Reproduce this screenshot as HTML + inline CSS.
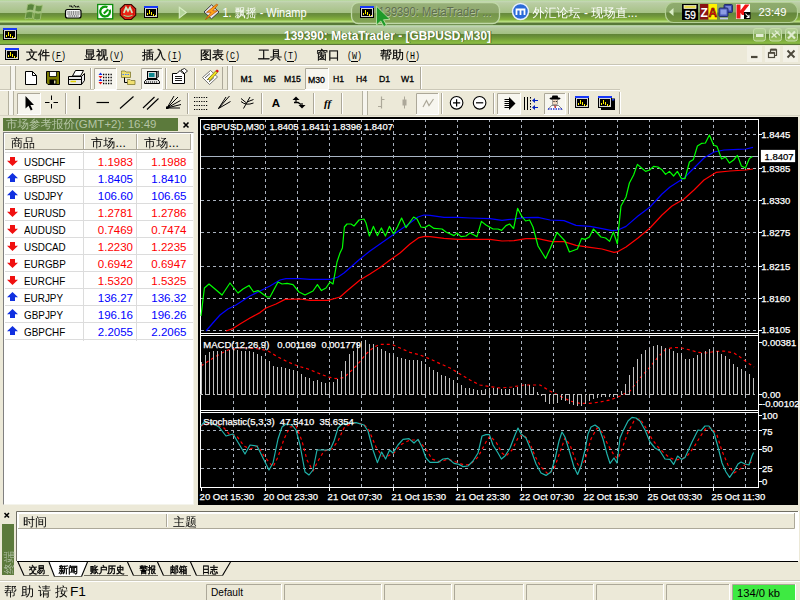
<!DOCTYPE html>
<html><head><meta charset="utf-8"><title>139390: MetaTrader - [GBPUSD,M30]</title>
<style>
html,body{margin:0;padding:0;}
body{width:800px;height:600px;overflow:hidden;position:relative;background:#ece9d8;font-family:"Liberation Sans","Noto Sans CJK SC",sans-serif;font-size:11px;color:#000;}
div,span,svg{position:absolute;box-sizing:border-box;}
.cj{font-family:"Liberation Sans","WenQuanYi Zen Hei","Noto Sans CJK SC",sans-serif;}
.sym{left:24px;width:60px;height:17px;line-height:18px;font-size:11.5px;transform:scaleX(0.86);transform-origin:0 0;}
.bid{left:87px;width:46px;height:17px;line-height:18px;font-size:11.5px;text-align:right;}
.ask{left:140.5px;width:46px;height:17px;line-height:18px;font-size:11.5px;text-align:right;}
.rl{left:5px;width:188px;height:1px;background:#dcdcdc;}
.ar{left:7px;}
</style></head><body>

<svg width="800" height="45" viewBox="0 0 800 45" style="left:0;top:0" font-family="Liberation Sans, WenQuanYi Zen Hei, Noto Sans CJK SC, sans-serif">
<defs>
<linearGradient id="gtask" x1="0" y1="0" x2="0" y2="25" gradientUnits="userSpaceOnUse">
<stop offset="0.000" stop-color="#b4d898"/><stop offset="0.060" stop-color="#c2d6b2"/><stop offset="0.120" stop-color="#bacda4"/><stop offset="0.512" stop-color="#a6c286"/><stop offset="0.524" stop-color="#66883e"/><stop offset="0.640" stop-color="#6f963a"/><stop offset="0.780" stop-color="#86b23e"/><stop offset="0.860" stop-color="#b6de7c"/><stop offset="0.908" stop-color="#8aa860"/><stop offset="0.928" stop-color="#587838"/><stop offset="1.000" stop-color="#587838"/>
</linearGradient>
<linearGradient id="gtitle" x1="0" y1="25" x2="0" y2="45" gradientUnits="userSpaceOnUse">
<stop offset="0.000" stop-color="#acd094"/><stop offset="0.075" stop-color="#bdd1b1"/><stop offset="0.150" stop-color="#b2c89c"/><stop offset="0.440" stop-color="#a2c082"/><stop offset="0.455" stop-color="#5f8238"/><stop offset="0.6" stop-color="#6a9236"/><stop offset="0.850" stop-color="#86b63e"/><stop offset="0.920" stop-color="#8abc44"/><stop offset="0.950" stop-color="#587634"/><stop offset="1.000" stop-color="#587634"/>
</linearGradient>
<linearGradient id="gbtn" x1="0" y1="2" x2="0" y2="24" gradientUnits="userSpaceOnUse">
<stop offset="0" stop-color="#98b07a"/><stop offset="0.48" stop-color="#8ea86c"/><stop offset="0.53" stop-color="#74944a"/><stop offset="1" stop-color="#86a856"/>
</linearGradient>
<linearGradient id="gtray" x1="0" y1="2" x2="0" y2="22" gradientUnits="userSpaceOnUse">
<stop offset="0" stop-color="#90ac70"/><stop offset="0.5" stop-color="#88a666"/><stop offset="0.55" stop-color="#64863c"/><stop offset="1" stop-color="#76983f"/>
</linearGradient>
<linearGradient id="gcap" x1="0" y1="28" x2="0" y2="41" gradientUnits="userSpaceOnUse">
<stop offset="0" stop-color="#b4d098"/><stop offset="0.42" stop-color="#a6c686"/><stop offset="0.5" stop-color="#82a852"/><stop offset="1" stop-color="#9cc45c"/>
</linearGradient>

</defs>
<rect x="0" y="0" width="800" height="25" fill="url(#gtask)"/>
<rect x="0" y="25" width="800" height="20" fill="url(#gtitle)"/>
<g stroke="#a4c47c" stroke-width="0.9" opacity="0.9"><path d="M27.500 4.500Q31 3 34.500 4.500L33.500 10.500Q30 9.500 26.500 11Z" fill="#4f7c32"/><path d="M35.800 5Q39 6.500 42.500 5L41.500 11.500Q38 12.500 34.800 11Z" fill="#5c8a3a"/><path d="M26.200 12.200Q29.500 10.800 33.200 12L32.200 18.500Q28.800 17.500 25 19Z" fill="#5c8a3a"/><path d="M34.500 12.500Q37.800 14 41.200 12.800L40.200 19.500Q36.800 20.500 33.500 19Z" fill="#66923e"/></g>
<g><path d="M69.500 6.500q1-1.500 2 0t2 0 2 0 2 0 1.500 1.5" fill="none" stroke="#111" stroke-width="1.3" stroke-dasharray="1.200,0.6"/><rect x="65.5" y="9.5" width="15.5" height="8.5" rx="2" fill="#f6f6f6" stroke="#000" stroke-width="1.2"/><path d="M67.500 12H79.500M67.500 14H79.500M68.500 16H78.5" stroke="#222" stroke-width="1.2" stroke-dasharray="1.100,0.700"/></g>
<g><rect x="97.700" y="4.5" width="15" height="14.3" fill="#fff" stroke="#0c8c0c" stroke-width="1.3"/><path d="M107.40 7.27A4.9 4.9 0 1 0 109.64 9.76" fill="none" stroke="#0c9c0c" stroke-width="2.3"/><path d="M103.800 13.600L108.300 9.3" stroke="#0c9c0c" stroke-width="2.100"/></g>
<g><path d="M124.700 4.500H131.300L135.700 8.800V15.200L131.300 19.500H124.700L120.300 15.200V8.800Z" fill="#ee2416" stroke="#3a0804" stroke-width="1.100"/><circle cx="128" cy="12" r="6" fill="none" stroke="#b01008" stroke-width="0.8"/><path d="M123.800 13L126 7.500L128 11L130 7.500L132.200 13" fill="none" stroke="#cdeac4" stroke-width="1.700" stroke-linejoin="miter"/><path d="M123.500 15.300Q128 17.300 132.500 15.3" stroke="#9cd890" stroke-width="1.2" fill="none"/></g>
<g transform="translate(144,6)" shape-rendering="crispEdges"><rect x="0" y="0" width="14" height="12" fill="#000"/><rect x="0" y="0" width="14" height="2" fill="#1838f8"/><rect x="1.5" y="2.5" width="11" height="8" fill="#000" stroke="#d4d4d4" stroke-width="1"/><path d="M3.5 9V7M5.5 7.500V4M7.500 9V5.500M9.500 10V7.500M11.500 10V8.5" stroke="#fff000" stroke-width="1"/></g>
<path d="M179.300 7.300L186.300 12.600L179.300 17.900Z" fill="#b4d49a" stroke="#d8ecc4" stroke-width="1.100"/>
<g><path d="M204 12L211.500 4.800L219 12L211.500 18.800Z" fill="#e4e4ec" stroke="#3c3c44" stroke-width="1"/><path d="M216.500 4.300L206.500 12.300H211L205.500 19.500L217.500 10.800H212.800L217.800 4.800Z" fill="#ffa418" stroke="#b84800" stroke-width="0.700"/></g>
<text x="222.5" y="16.5" font-size="12" fill="#fff" textLength="84" lengthAdjust="spacingAndGlyphs">1. 飘摇 - Winamp</text>
<rect x="351.5" y="2.5" width="148" height="21" rx="7" fill="url(#gbtn)" stroke="#c0d8a8" stroke-width="1.3"/>
<g transform="translate(360,6)" shape-rendering="crispEdges"><rect x="0" y="0" width="14" height="12" fill="#000"/><rect x="0" y="0" width="14" height="2" fill="#1838f8"/><rect x="1.5" y="2.5" width="11" height="8" fill="#000" stroke="#d4d4d4" stroke-width="1"/><path d="M3.5 9V7M5.5 7.500V4M7.500 9V5.500M9.500 10V7.500M11.500 10V8.5" stroke="#fff000" stroke-width="1"/></g>
<text x="379" y="16.5" font-size="12" fill="#b9c9a3" opacity="0.95" textLength="113" lengthAdjust="spacingAndGlyphs">139390: MetaTrader ...</text>
<text x="378.5" y="16" font-size="12" fill="#5e6e4e" textLength="113" lengthAdjust="spacingAndGlyphs">139390: MetaTrader ...</text>
<path d="M376.500 6.200V25L380.800 21L383.800 26.500L386.500 25.200L383.500 19.800L390 19.300Z" fill="#1f9a2a" stroke="#b8e0a0" stroke-width="0.9"/>
<g><circle cx="520.5" cy="11.5" r="8" fill="#2a6ad8" stroke="#e8f0ff" stroke-width="1.5"/><path d="M516.500 15V9.500H524.500V15M520.500 10V15" fill="none" stroke="#fff" stroke-width="1.8"/></g>
<text x="532.5" y="16.5" font-size="12.5" fill="#fff" textLength="105" lengthAdjust="spacingAndGlyphs">外汇论坛 - 现场直...</text>
<rect x="665.5" y="2.5" width="132" height="20" rx="8" fill="url(#gtray)" stroke="#b4d096" stroke-width="1.2"/>
<path d="M673.500 8L669 12L673.500 16Z" fill="#d8ecc4"/>
<g><rect x="682" y="4" width="16" height="16" fill="#000"/><rect x="684" y="5.5" width="12" height="3" fill="#e8dc50" stroke="#f8f8e8" stroke-width="0.700"/><text x="690.2" y="18.700" font-size="10" fill="#fff" stroke="#fff" stroke-width="0.3" text-anchor="middle">59</text></g>
<g><rect x="700" y="4" width="8.5" height="15.5" fill="#8a1414"/><rect x="708.5" y="4" width="8.5" height="15.5" fill="#fff200"/><text x="704.2" y="16.8" font-size="12" font-weight="bold" fill="#fff" text-anchor="middle">Z</text><text x="712.8" y="16.8" font-size="12" font-weight="bold" fill="#e81010" stroke="#400" stroke-width="0.5" text-anchor="middle">A</text></g>
<g><rect x="724" y="4.5" width="8.5" height="8" rx="1" fill="#3848a8" stroke="#1c2468" stroke-width="0.9"/><rect x="725.5" y="6" width="5.5" height="4.5" fill="#7888d8"/><rect x="719" y="8" width="9" height="8.5" rx="1" fill="#4858b8" stroke="#1c2468" stroke-width="0.9"/><rect x="720.5" y="9.5" width="6" height="5" fill="#8c9ce4"/><path d="M720 18.500H728" stroke="#c0c8e8" stroke-width="1.8"/></g>
<g><rect x="736" y="4" width="14" height="15" fill="#fff"/><path d="M736.500 4.500H740.500V10.500L745 4.500H749.500L743.800 11.800L746 15H742L740.500 12.800V18.500H736.500Z" fill="#f01414"/><rect x="744" y="12" width="6.5" height="7" fill="#000"/><path d="M745.500 13.500L749 17.500M749 14.800V17.500H746.5" stroke="#fff" stroke-width="1.100" fill="none"/></g>
<text x="758.5" y="16" font-size="11.2" fill="#fff">23:49</text>
<g transform="translate(3,28)" shape-rendering="crispEdges"><rect x="0" y="0" width="14" height="12" fill="#000"/><rect x="0" y="0" width="14" height="2" fill="#1838f8"/><rect x="1.5" y="2.5" width="11" height="8" fill="#000" stroke="#d4d4d4" stroke-width="1"/><path d="M3.5 9V7M5.5 7.500V4M7.500 9V5.500M9.500 10V7.500M11.500 10V8.5" stroke="#fff000" stroke-width="1"/></g>
<text x="285" y="40.2" font-size="12.5" font-weight="bold" fill="#4f6a30" textLength="207" lengthAdjust="spacingAndGlyphs">139390: MetaTrader - [GBPUSD,M30]</text>
<text x="284" y="39.5" font-size="12.5" font-weight="bold" fill="#fff" textLength="207" lengthAdjust="spacingAndGlyphs">139390: MetaTrader - [GBPUSD,M30]</text>
<rect x="753.5" y="28.5" width="12" height="12.5" rx="2.5" fill="url(#gcap)" stroke="#c4dca8" stroke-width="1"/>
<rect x="769.5" y="28.5" width="12" height="12.5" rx="2.5" fill="url(#gcap)" stroke="#c4dca8" stroke-width="1"/>
<rect x="785.5" y="28.5" width="12" height="12.5" rx="2.5" fill="url(#gcap)" stroke="#c4dca8" stroke-width="1"/>
<rect x="756" y="34" width="7.5" height="3" fill="#e4eed6"/>
<path d="M771.500 37.500L778.500 31.500M775 30.500L780 35.500M772 33L776.500 37.5" stroke="#e0ecd0" stroke-width="1.3" fill="none"/>
<path d="M788 31.500L795 38.500M795 31.500L788 38.5" stroke="#e0ecd0" stroke-width="2.2"/>
</svg>
<svg width="800" height="72" viewBox="0 45 800 72" style="left:0;top:45px" font-family="Liberation Sans, WenQuanYi Zen Hei, Noto Sans CJK SC, sans-serif">
<rect x="0" y="45" width="800" height="72" fill="#ece9d8"/>
<path d="M0 64.500H800" stroke="#aca899" stroke-width="1" opacity="0.55"/><path d="M0 65.500H800" stroke="#ffffff" stroke-width="1"/>
<path d="M0 89.500H620" stroke="#aca899" opacity="0.5"/><path d="M0 90.500H620" stroke="#ffffff"/>
<path d="M0 115.500H800" stroke="#aca899" opacity="0.35"/>
<g transform="translate(5,48)"><g shape-rendering="crispEdges"><rect x="0" y="0" width="14" height="12" fill="#000"/><rect x="0" y="0" width="14" height="2" fill="#1838f8"/><rect x="1.5" y="2.5" width="11" height="8" fill="#000" stroke="#d4d4d4" stroke-width="1"/><path d="M3.5 9V7M5.5 7.500V4M7.500 9V5.500M9.500 10V7.500M11.500 10V8.500" stroke="#fff000" stroke-width="1"/></g></g>
<text x="26" y="59" font-size="12" fill="#000" stroke="#000" stroke-width="0.250">文件</text>
<text x="51" y="59" font-size="11.500" font-family="Liberation Mono, monospace" fill="#000" textLength="15" lengthAdjust="spacingAndGlyphs">(F)</text>
<path d="M55 61.500H62" stroke="#000" stroke-width="1"/>
<text x="84" y="59" font-size="12" fill="#000" stroke="#000" stroke-width="0.250">显视</text>
<text x="109" y="59" font-size="11.500" font-family="Liberation Mono, monospace" fill="#000" textLength="15" lengthAdjust="spacingAndGlyphs">(V)</text>
<path d="M113 61.500H120" stroke="#000" stroke-width="1"/>
<text x="142" y="59" font-size="12" fill="#000" stroke="#000" stroke-width="0.250">插入</text>
<text x="167" y="59" font-size="11.500" font-family="Liberation Mono, monospace" fill="#000" textLength="15" lengthAdjust="spacingAndGlyphs">(I)</text>
<path d="M171 61.500H178" stroke="#000" stroke-width="1"/>
<text x="200" y="59" font-size="12" fill="#000" stroke="#000" stroke-width="0.250">图表</text>
<text x="225" y="59" font-size="11.500" font-family="Liberation Mono, monospace" fill="#000" textLength="15" lengthAdjust="spacingAndGlyphs">(C)</text>
<path d="M229 61.500H236" stroke="#000" stroke-width="1"/>
<text x="258" y="59" font-size="12" fill="#000" stroke="#000" stroke-width="0.250">工具</text>
<text x="283" y="59" font-size="11.500" font-family="Liberation Mono, monospace" fill="#000" textLength="15" lengthAdjust="spacingAndGlyphs">(T)</text>
<path d="M287 61.500H294" stroke="#000" stroke-width="1"/>
<text x="316" y="59" font-size="12" fill="#000" stroke="#000" stroke-width="0.250">窗口 </text>
<text x="347" y="59" font-size="11.500" font-family="Liberation Mono, monospace" fill="#000" textLength="15" lengthAdjust="spacingAndGlyphs">(W)</text>
<path d="M351 61.500H358" stroke="#000" stroke-width="1"/>
<text x="380" y="59" font-size="12" fill="#000" stroke="#000" stroke-width="0.250">帮助</text>
<text x="405" y="59" font-size="11.500" font-family="Liberation Mono, monospace" fill="#000" textLength="15" lengthAdjust="spacingAndGlyphs">(H)</text>
<path d="M409 61.500H416" stroke="#000" stroke-width="1"/>
<rect x="747" y="46" width="15" height="16" fill="#f3f1e6"/>
<rect x="765" y="46" width="15" height="16" fill="#f3f1e6"/>
<rect x="783" y="46" width="15" height="16" fill="#f3f1e6"/>
<path d="M751 57H757.500" stroke="#4c483c" stroke-width="2.200"/>
<path d="M770.500 52V49.800H776.500V55.500H774.500" stroke="#4c483c" fill="none" stroke-width="1.200"/><path d="M770.500 49.500H776.500" stroke="#4c483c" stroke-width="1.800"/><rect x="768.500" y="52.800" width="6" height="4.700" fill="#f3f1e6" stroke="#4c483c" stroke-width="1.200"/><path d="M768.500 52.800H774.500" stroke="#4c483c" stroke-width="1.800"/>
<path d="M787.500 50.500L794.500 57.500M794.500 50.500L787.500 57.500" stroke="#4c483c" stroke-width="1.900"/>
<rect x="10" y="66" width="5" height="24" fill="#f6f5ee"/><path d="M10.5 66V90M15.5 66V90" stroke="#b4b1a0"/>
<path d="M25.500 71.500H32.500L36.500 75.500V84.500H25.500Z" fill="#fff" stroke="#000"/><path d="M32.500 71.500V75.500H36.500" fill="none" stroke="#000"/>
<path d="M46.500 71.500H59.500V84.500H48L46.500 83Z" fill="#7b7b00" stroke="#000"/><rect x="49.500" y="71.500" width="7" height="5" fill="#fff" stroke="#000" stroke-width="0.800"/><rect x="49.500" y="79.500" width="7" height="5" fill="#000"/><rect x="54" y="80.500" width="1.500" height="3" fill="#d8d8a0"/>
<path d="M72.500 76L75.500 70.500H83.500L80.500 76Z" fill="#fff" stroke="#000"/><path d="M68.500 76.500H81.500L84.500 73.500V80.500L81.500 84.500H68.500Z" fill="#e8e8e8" stroke="#000"/><path d="M81.500 76.500V84.500M69 79.500H81" stroke="#000" fill="none"/><path d="M70.500 81.500H76" stroke="#e0d000" stroke-width="1.500"/>
<path d="M90.5 68V89" stroke="#aca899"/><path d="M91.5 68V89" stroke="#ffffff"/>
<rect x="94" y="68" width="22" height="21" fill="#f7f6ef"/><path d="M94.5 89V68.5H116" stroke="#aca899" fill="none"/><path d="M116.5 68V89.5H94" stroke="#ffffff" fill="none"/>
<path d="M103 74.5H113" stroke="#000" stroke-width="1.400" stroke-dasharray="1.300,1.200"/>
<path d="M103 77.5H113" stroke="#000" stroke-width="1.400" stroke-dasharray="1.300,1.200"/>
<path d="M103 80.5H113" stroke="#000" stroke-width="1.400" stroke-dasharray="1.300,1.200"/>
<path d="M103 83.5H113" stroke="#000" stroke-width="1.400" stroke-dasharray="1.300,1.200"/>
<path d="M98.500 75L100.500 72.500L102.500 75Z" fill="#1030e0"/><path d="M98.500 76L100.500 78.500L102.500 76Z" fill="#f01010"/><path d="M98.500 81L100.500 78.800L102.500 81Z" fill="#1030e0"/><path d="M98.500 82L100.500 84.500L102.500 82Z" fill="#f01010"/>
<path d="M121.500 72.500V71H125L126 72H130.500V77.500H121.500Z" fill="#f0e070" stroke="#807830" stroke-width="0.800"/><path d="M124.500 77.500V82.500H128" stroke="#000" fill="none"/><path d="M127.500 80.500V79.500H130L131 80.500H135V84.500H127.500Z" fill="#f0e070" stroke="#807830" stroke-width="0.800"/><path d="M122.500 74.500H129.500" stroke="#4080ff" stroke-width="1.200" stroke-dasharray="1.500,1"/>
<rect x="141" y="68" width="21" height="21" fill="#f7f6ef"/><path d="M141.5 89V68.5H162" stroke="#aca899" fill="none"/><path d="M162.5 68V89.5H141" stroke="#ffffff" fill="none"/>
<rect x="147.500" y="71.500" width="9" height="7" fill="#d8d8d8" stroke="#000"/><rect x="149" y="73" width="5.500" height="4" fill="#108890"/><path d="M156.500 72V78.500L158.500 77V71Z" fill="#808080" stroke="#000" stroke-width="0.600"/><path d="M146.500 79.500H157.500L159.500 81.500V83.500H144.500V81.500Z" fill="#e0e0e0" stroke="#000"/><path d="M146 82H158" stroke="#000" stroke-dasharray="1,1"/>
<path d="M165.5 68V89" stroke="#aca899"/><path d="M166.5 68V89" stroke="#ffffff"/>
<path d="M172.500 73.500H177L180 70.500L183 73.500H184.500V83.500H172.500Z" fill="#fff" stroke="#000"/><path d="M175 76.500H182M175 78.500H182M175 80.500H182" stroke="#000" stroke-width="0.900"/><path d="M181 70L184.500 68.500L187.500 71L184.500 73.500Z" fill="#fff" stroke="#000" stroke-width="0.800"/>
<path d="M194.5 68V89" stroke="#aca899"/><path d="M195.5 68V89" stroke="#ffffff"/>
<path d="M202.500 77.500L210.500 70.500L217.500 77L209.500 84.500Z" fill="#fff" stroke="#555" stroke-width="0.800"/><path d="M205 78L210 73.500M207 80L212 75.500M209 82L214 77.500" stroke="#333" stroke-width="0.800"/><path d="M208 79L215.500 71L217.500 72.500L210 80.500Z" fill="#f0e020" stroke="#605800" stroke-width="0.600"/><path d="M215.500 71L217 69.500L219 71L217.500 72.500Z" fill="#e01010"/>
<path d="M222.500 67V89" stroke="#aca899"/>
<rect x="227" y="66" width="5" height="24" fill="#f6f5ee"/><path d="M227.5 66V90M232.5 66V90" stroke="#b4b1a0"/>
<rect x="305" y="68" width="23" height="21" fill="#f7f6ef"/><path d="M305.5 89V68.5H328" stroke="#aca899" fill="none"/><path d="M328.5 68V89.5H305" stroke="#ffffff" fill="none"/>
<text x="246.5" y="81.8" font-size="8.700" text-anchor="middle" fill="#000" stroke="#000" stroke-width="0.300">M1</text>
<text x="269.5" y="81.8" font-size="8.700" text-anchor="middle" fill="#000" stroke="#000" stroke-width="0.300">M5</text>
<text x="292.5" y="81.8" font-size="8.700" text-anchor="middle" fill="#000" stroke="#000" stroke-width="0.300">M15</text>
<text x="316.5" y="82.5" font-size="8.700" text-anchor="middle" fill="#000" stroke="#000" stroke-width="0.300">M30</text>
<text x="338.5" y="81.8" font-size="8.700" text-anchor="middle" fill="#000" stroke="#000" stroke-width="0.300">H1</text>
<text x="361.5" y="81.8" font-size="8.700" text-anchor="middle" fill="#000" stroke="#000" stroke-width="0.300">H4</text>
<text x="384.5" y="81.8" font-size="8.700" text-anchor="middle" fill="#000" stroke="#000" stroke-width="0.300">D1</text>
<text x="407.5" y="81.8" font-size="8.700" text-anchor="middle" fill="#000" stroke="#000" stroke-width="0.300">W1</text>
<path d="M420.500 67V89" stroke="#aca899"/><path d="M421.500 67V89" stroke="#ffffff"/>
<rect x="8" y="91" width="5" height="24" fill="#f6f5ee"/><path d="M8.5 91V115M13.5 91V115" stroke="#b4b1a0"/>
<rect x="17" y="93" width="23" height="21" fill="#f7f6ef"/><path d="M17.5 114V93.5H40" stroke="#aca899" fill="none"/><path d="M40.5 93V114.5H17" stroke="#ffffff" fill="none"/>
<path d="M25.500 96V108.500L28.500 105.800L30.800 110.500L32.600 109.600L30.400 105H34Z" fill="#000"/>
<path d="M51.500 95.500V100M51.500 104V108.500M45 102.500H49.500M53.500 102.500H58" stroke="#000"/>
<path d="M65.5 93V114" stroke="#aca899"/><path d="M66.5 93V114" stroke="#ffffff"/>
<path d="M79.500 96V109" stroke="#000" stroke-width="1.200"/>
<path d="M96.500 102.500H109" stroke="#000" stroke-width="1.200"/>
<path d="M120 108.500L133.500 96.500" stroke="#000" stroke-width="1.100"/>
<path d="M143 108L154.500 97M147 109.500L158.500 98.500" stroke="#000" stroke-width="1.100"/>
<path d="M167 108L174 96M167 108L178 97M167 108L180.500 100.500M167 108L181 104.500M167 108L180 108" stroke="#000" stroke-width="1"/><rect x="166" y="106.500" width="2.500" height="2.500" fill="#000"/>
<path d="M187.5 93V114" stroke="#aca899"/><path d="M188.5 93V114" stroke="#ffffff"/>
<path d="M194 97.5H207.500" stroke="#000" stroke-width="1.200" stroke-dasharray="1.200,1.200"/>
<path d="M194 101.5H207.500" stroke="#000" stroke-width="1.200" stroke-dasharray="1.200,1.200"/>
<path d="M194 105.5H207.500" stroke="#000" stroke-width="1.200" stroke-dasharray="1.200,1.200"/>
<path d="M194 109.5H207.500" stroke="#000" stroke-width="1.200" stroke-dasharray="1.200,1.200"/>
<path d="M218.500 108.500L229.500 96M218.500 108.500L230.500 101.500M218.500 108.500L226 97" stroke="#000" stroke-width="1"/>
<path d="M243.500 108.500L250 97M246.500 103L241 98.500M247 102L253.500 99.500M241 101.500Q246 106 253.500 103" stroke="#000" stroke-width="1" fill="none"/>
<path d="M261.5 93V114" stroke="#aca899"/><path d="M262.5 93V114" stroke="#ffffff"/>
<text x="276" y="107.300" font-size="11.500" font-weight="bold" text-anchor="middle" fill="#000">A</text>
<path d="M292.500 100L296 96.500L299.500 100Z" fill="#000"/><path d="M298.500 105L302 108.500L305.500 105Z" fill="#000"/><path d="M294 102.500L298 102.500L301 104.500" stroke="#000" stroke-width="1.500" fill="none"/><path d="M296 100V102M302 103V105" stroke="#000" stroke-width="1.200"/>
<path d="M313.5 93V114" stroke="#aca899"/><path d="M314.5 93V114" stroke="#ffffff"/>
<text x="327.500" y="106.500" font-size="11" font-style="italic" font-weight="bold" font-family="Liberation Serif, serif" text-anchor="middle" fill="#000">ff</text>
<path d="M341.5 93V114" stroke="#aca899"/><path d="M342.5 93V114" stroke="#ffffff"/>
<rect x="362" y="91" width="5" height="24" fill="#f6f5ee"/><path d="M362.5 91V115M367.5 91V115" stroke="#b4b1a0"/>
<path d="M381.500 96.500V108.500M381.500 99.500H384.500M378 106.500H381.500" stroke="#aca899" stroke-width="1.200" fill="none"/>
<path d="M404.500 96.500V108.500" stroke="#aca899"/><rect x="402.500" y="99.500" width="4" height="6" fill="#aca899"/>
<rect x="416" y="93" width="22" height="21" fill="#f7f6ef"/><path d="M416.5 114V93.5H438" stroke="#aca899" fill="none"/><path d="M438.5 93V114.5H416" stroke="#ffffff" fill="none"/>
<path d="M423 107L426.500 100.500L429 105.500L433.500 99" stroke="#aca899" stroke-width="1.200" fill="none"/>
<path d="M441.5 93V114" stroke="#aca899"/><path d="M442.5 93V114" stroke="#ffffff"/>
<circle cx="456.600" cy="102.800" r="6.300" fill="#fff" stroke="#000" stroke-width="1.100"/><path d="M453 102.800H460.200M456.600 99.200V106.400" stroke="#000" stroke-width="1.200"/>
<circle cx="479.600" cy="102.800" r="6.300" fill="#fff" stroke="#000" stroke-width="1.100"/><path d="M476 102.800H483.200" stroke="#000" stroke-width="1.200"/>
<path d="M493.5 93V114" stroke="#aca899"/><path d="M494.5 93V114" stroke="#ffffff"/>
<rect x="497" y="93" width="23" height="21" fill="#f7f6ef"/><path d="M497.5 114V93.5H520" stroke="#aca899" fill="none"/><path d="M520.5 93V114.5H497" stroke="#ffffff" fill="none"/>
<path d="M509 97L515.500 103.500L509 110Z" fill="#000"/><path d="M504.500 99.500H509M504.500 101.500H509M504.500 103.500H509M504.500 105.500H509M504.500 107.500H509" stroke="#000" stroke-width="1"/>
<path d="M524.500 97V110M527.500 97V110" stroke="#000"/><path d="M530.500 97V110" stroke="#000" stroke-dasharray="1.500,1.500"/><path d="M532 100.500L535 98V103ZM532 107.500L535 105V110Z" fill="#0020c0"/><path d="M534 100.500H538M534 107.500H538" stroke="#0020c0" stroke-width="1.200"/>
<rect x="544" y="93" width="21" height="21" fill="#f7f6ef"/><path d="M544.5 114V93.5H565" stroke="#aca899" fill="none"/><path d="M565.5 93V114.5H544" stroke="#ffffff" fill="none"/>
<ellipse cx="555" cy="98.500" rx="5.500" ry="1.300" fill="#000"/><rect x="552" y="95.500" width="6" height="3" rx="1" fill="#000"/><rect x="552.500" y="99.500" width="5" height="5" fill="#f4d8c0" stroke="#555" stroke-width="0.500"/><path d="M553.500 101.500H554.500M555.800 101.500H556.800" stroke="#000"/><path d="M548 109.500L551.500 105.500H558.500L562.500 109.500" fill="#fff" stroke="#555" stroke-width="0.700"/><path d="M548 109H562.500" stroke="#2030d0" stroke-width="1.500" stroke-dasharray="1.500,1"/><path d="M554.500 105.500L555.200 108L556 105.500" stroke="#c01010" fill="none" stroke-width="0.800"/>
<path d="M568.5 93V114" stroke="#aca899"/><path d="M569.5 93V114" stroke="#ffffff"/>
<g transform="translate(575,96)"><g shape-rendering="crispEdges"><rect x="0" y="0" width="14" height="12" fill="#000"/><rect x="0" y="0" width="14" height="2" fill="#1838f8"/><rect x="1.5" y="2.5" width="11" height="8" fill="#000" stroke="#d4d4d4" stroke-width="1"/><path d="M3.5 9V7M5.5 7.500V4M7.500 9V5.500M9.500 10V7.500M11.500 10V8.500" stroke="#fff000" stroke-width="1"/></g></g>
<rect x="601" y="98.500" width="14" height="11.500" fill="#000"/><rect x="601.800" y="99" width="12.500" height="1.500" fill="#2040e0"/>
<g transform="translate(598,96)"><g shape-rendering="crispEdges"><rect x="0" y="0" width="14" height="12" fill="#000"/><rect x="0" y="0" width="14" height="2" fill="#1838f8"/><rect x="1.5" y="2.5" width="11" height="8" fill="#000" stroke="#d4d4d4" stroke-width="1"/><path d="M3.5 9V7M5.5 7.500V4M7.500 9V5.500M9.500 10V7.500M11.500 10V8.500" stroke="#fff000" stroke-width="1"/></g></g>
<path d="M619.500 92V114" stroke="#aca899"/><path d="M620.500 92V114" stroke="#ffffff"/>
</svg>

<!-- market watch -->
<div id="mwhead" class="cj" style="left:3px;top:118px;width:175px;height:13px;background:#5c7a3c;color:#b4c4a4;font-size:11.5px;line-height:13px;padding-left:3px;white-space:nowrap;overflow:hidden">市场参考报价(GMT+2): 16:49</div>
<svg style="left:182px;top:121px" width="8" height="8" viewBox="0 0 8 8"><path d="M1.5 1.5L6.5 6.5M6.5 1.500L1.500 6.500" stroke="#000" stroke-width="1.600"/></svg>
<div id="mw" style="left:3px;top:132px;width:191px;height:373px;background:#fff;border:1px solid;border-color:#808080 #f4f4ec #f4f4ec #808080"></div>
<div style="left:5px;top:133px;width:186px;height:17px;background:#ece9d8;border-bottom:1px solid #aca899;border-top:1px solid #fff"></div>
<div class="cj" style="left:11px;top:136px;font-size:12px;line-height:14px">商品</div>
<div class="cj" style="left:91px;top:136px;font-size:12px;line-height:14px;letter-spacing:0.2px">市场...</div>
<div class="cj" style="left:144px;top:136px;font-size:12px;line-height:14px;letter-spacing:0.2px">市场...</div>
<div style="left:83px;top:134px;width:1px;height:15px;background:#aca899"></div><div style="left:84px;top:134px;width:1px;height:15px;background:#fff"></div>
<div style="left:136px;top:134px;width:1px;height:15px;background:#aca899"></div><div style="left:137px;top:134px;width:1px;height:15px;background:#fff"></div>
<div style="left:190px;top:134px;width:1px;height:15px;background:#aca899"></div>
<div style="left:83px;top:151px;width:1px;height:190px;background:#dcdcdc"></div>
<div style="left:136px;top:151px;width:1px;height:190px;background:#dcdcdc"></div>
<div class="rl" style="top:152px"></div>
<svg class="ar" style="top:157px" width="11" height="10" viewBox="0 0 11 10"><path d="M3 0H8V3.800H11L5.5 9L0 3.800H3Z" fill="#f01010"/></svg><div class="sym" style="top:153px">USDCHF</div><div class="bid" style="top:153px;color:#ff0000">1.1983</div><div class="ask" style="top:153px;color:#ff0000">1.1988</div><div class="rl" style="top:169px"></div>
<svg class="ar" style="top:173px" width="11" height="10" viewBox="0 0 11 10"><path d="M5.5 0L11 5.2H8V9H3V5.2H0Z" fill="#1030e0"/></svg><div class="sym" style="top:170px">GBPUSD</div><div class="bid" style="top:170px;color:#0000ff">1.8405</div><div class="ask" style="top:170px;color:#0000ff">1.8410</div><div class="rl" style="top:186px"></div>
<svg class="ar" style="top:190px" width="11" height="10" viewBox="0 0 11 10"><path d="M5.5 0L11 5.2H8V9H3V5.2H0Z" fill="#1030e0"/></svg><div class="sym" style="top:187px">USDJPY</div><div class="bid" style="top:187px;color:#0000ff">106.60</div><div class="ask" style="top:187px;color:#0000ff">106.65</div><div class="rl" style="top:203px"></div>
<svg class="ar" style="top:208px" width="11" height="10" viewBox="0 0 11 10"><path d="M3 0H8V3.800H11L5.5 9L0 3.800H3Z" fill="#f01010"/></svg><div class="sym" style="top:204px">EURUSD</div><div class="bid" style="top:204px;color:#ff0000">1.2781</div><div class="ask" style="top:204px;color:#ff0000">1.2786</div><div class="rl" style="top:220px"></div>
<svg class="ar" style="top:225px" width="11" height="10" viewBox="0 0 11 10"><path d="M3 0H8V3.800H11L5.5 9L0 3.800H3Z" fill="#f01010"/></svg><div class="sym" style="top:221px">AUDUSD</div><div class="bid" style="top:221px;color:#ff0000">0.7469</div><div class="ask" style="top:221px;color:#ff0000">0.7474</div><div class="rl" style="top:237px"></div>
<svg class="ar" style="top:242px" width="11" height="10" viewBox="0 0 11 10"><path d="M3 0H8V3.800H11L5.5 9L0 3.800H3Z" fill="#f01010"/></svg><div class="sym" style="top:238px">USDCAD</div><div class="bid" style="top:238px;color:#ff0000">1.2230</div><div class="ask" style="top:238px;color:#ff0000">1.2235</div><div class="rl" style="top:254px"></div>
<svg class="ar" style="top:259px" width="11" height="10" viewBox="0 0 11 10"><path d="M3 0H8V3.800H11L5.5 9L0 3.800H3Z" fill="#f01010"/></svg><div class="sym" style="top:255px">EURGBP</div><div class="bid" style="top:255px;color:#ff0000">0.6942</div><div class="ask" style="top:255px;color:#ff0000">0.6947</div><div class="rl" style="top:271px"></div>
<svg class="ar" style="top:276px" width="11" height="10" viewBox="0 0 11 10"><path d="M3 0H8V3.800H11L5.5 9L0 3.800H3Z" fill="#f01010"/></svg><div class="sym" style="top:272px">EURCHF</div><div class="bid" style="top:272px;color:#ff0000">1.5320</div><div class="ask" style="top:272px;color:#ff0000">1.5325</div><div class="rl" style="top:288px"></div>
<svg class="ar" style="top:292px" width="11" height="10" viewBox="0 0 11 10"><path d="M5.5 0L11 5.2H8V9H3V5.2H0Z" fill="#1030e0"/></svg><div class="sym" style="top:289px">EURJPY</div><div class="bid" style="top:289px;color:#0000ff">136.27</div><div class="ask" style="top:289px;color:#0000ff">136.32</div><div class="rl" style="top:305px"></div>
<svg class="ar" style="top:309px" width="11" height="10" viewBox="0 0 11 10"><path d="M5.5 0L11 5.2H8V9H3V5.2H0Z" fill="#1030e0"/></svg><div class="sym" style="top:306px">GBPJPY</div><div class="bid" style="top:306px;color:#0000ff">196.16</div><div class="ask" style="top:306px;color:#0000ff">196.26</div><div class="rl" style="top:322px"></div>
<svg class="ar" style="top:326px" width="11" height="10" viewBox="0 0 11 10"><path d="M5.5 0L11 5.2H8V9H3V5.2H0Z" fill="#1030e0"/></svg><div class="sym" style="top:323px">GBPCHF</div><div class="bid" style="top:323px;color:#0000ff">2.2055</div><div class="ask" style="top:323px;color:#0000ff">2.2065</div><div class="rl" style="top:339px"></div>

<svg id="chart" width="602" height="392" viewBox="0 0 602 392" style="position:absolute;left:198px;top:116px" shape-rendering="crispEdges" font-family="Liberation Sans, sans-serif" font-size="9.5" fill="#fff">
<rect x="0" y="0" width="602" height="392" fill="#ece9d8"/>
<rect x="0" y="1" width="600" height="388" fill="#000"/>
<line x1="35.5" y1="4" x2="35.5" y2="217" stroke="#a9b1bd" stroke-dasharray="3,3" stroke-dashoffset="1"/>
<line x1="35.5" y1="220" x2="35.5" y2="294" stroke="#a9b1bd" stroke-dasharray="3,3" stroke-dashoffset="1"/>
<line x1="35.5" y1="297" x2="35.5" y2="371" stroke="#a9b1bd" stroke-dasharray="3,3" stroke-dashoffset="1"/>
<line x1="67.5" y1="4" x2="67.5" y2="217" stroke="#a9b1bd" stroke-dasharray="3,3" stroke-dashoffset="1"/>
<line x1="67.5" y1="220" x2="67.5" y2="294" stroke="#a9b1bd" stroke-dasharray="3,3" stroke-dashoffset="1"/>
<line x1="67.5" y1="297" x2="67.5" y2="371" stroke="#a9b1bd" stroke-dasharray="3,3" stroke-dashoffset="1"/>
<line x1="99.5" y1="4" x2="99.5" y2="217" stroke="#a9b1bd" stroke-dasharray="3,3" stroke-dashoffset="1"/>
<line x1="99.5" y1="220" x2="99.5" y2="294" stroke="#a9b1bd" stroke-dasharray="3,3" stroke-dashoffset="1"/>
<line x1="99.5" y1="297" x2="99.5" y2="371" stroke="#a9b1bd" stroke-dasharray="3,3" stroke-dashoffset="1"/>
<line x1="131.5" y1="4" x2="131.5" y2="217" stroke="#a9b1bd" stroke-dasharray="3,3" stroke-dashoffset="1"/>
<line x1="131.5" y1="220" x2="131.5" y2="294" stroke="#a9b1bd" stroke-dasharray="3,3" stroke-dashoffset="1"/>
<line x1="131.5" y1="297" x2="131.5" y2="371" stroke="#a9b1bd" stroke-dasharray="3,3" stroke-dashoffset="1"/>
<line x1="163.5" y1="4" x2="163.5" y2="217" stroke="#a9b1bd" stroke-dasharray="3,3" stroke-dashoffset="1"/>
<line x1="163.5" y1="220" x2="163.5" y2="294" stroke="#a9b1bd" stroke-dasharray="3,3" stroke-dashoffset="1"/>
<line x1="163.5" y1="297" x2="163.5" y2="371" stroke="#a9b1bd" stroke-dasharray="3,3" stroke-dashoffset="1"/>
<line x1="195.5" y1="4" x2="195.5" y2="217" stroke="#a9b1bd" stroke-dasharray="3,3" stroke-dashoffset="1"/>
<line x1="195.5" y1="220" x2="195.5" y2="294" stroke="#a9b1bd" stroke-dasharray="3,3" stroke-dashoffset="1"/>
<line x1="195.5" y1="297" x2="195.5" y2="371" stroke="#a9b1bd" stroke-dasharray="3,3" stroke-dashoffset="1"/>
<line x1="227.5" y1="4" x2="227.5" y2="217" stroke="#a9b1bd" stroke-dasharray="3,3" stroke-dashoffset="1"/>
<line x1="227.5" y1="220" x2="227.5" y2="294" stroke="#a9b1bd" stroke-dasharray="3,3" stroke-dashoffset="1"/>
<line x1="227.5" y1="297" x2="227.5" y2="371" stroke="#a9b1bd" stroke-dasharray="3,3" stroke-dashoffset="1"/>
<line x1="259.5" y1="4" x2="259.5" y2="217" stroke="#a9b1bd" stroke-dasharray="3,3" stroke-dashoffset="1"/>
<line x1="259.5" y1="220" x2="259.5" y2="294" stroke="#a9b1bd" stroke-dasharray="3,3" stroke-dashoffset="1"/>
<line x1="259.5" y1="297" x2="259.5" y2="371" stroke="#a9b1bd" stroke-dasharray="3,3" stroke-dashoffset="1"/>
<line x1="291.5" y1="4" x2="291.5" y2="217" stroke="#a9b1bd" stroke-dasharray="3,3" stroke-dashoffset="1"/>
<line x1="291.5" y1="220" x2="291.5" y2="294" stroke="#a9b1bd" stroke-dasharray="3,3" stroke-dashoffset="1"/>
<line x1="291.5" y1="297" x2="291.5" y2="371" stroke="#a9b1bd" stroke-dasharray="3,3" stroke-dashoffset="1"/>
<line x1="323.5" y1="4" x2="323.5" y2="217" stroke="#a9b1bd" stroke-dasharray="3,3" stroke-dashoffset="1"/>
<line x1="323.5" y1="220" x2="323.5" y2="294" stroke="#a9b1bd" stroke-dasharray="3,3" stroke-dashoffset="1"/>
<line x1="323.5" y1="297" x2="323.5" y2="371" stroke="#a9b1bd" stroke-dasharray="3,3" stroke-dashoffset="1"/>
<line x1="355.5" y1="4" x2="355.5" y2="217" stroke="#a9b1bd" stroke-dasharray="3,3" stroke-dashoffset="1"/>
<line x1="355.5" y1="220" x2="355.5" y2="294" stroke="#a9b1bd" stroke-dasharray="3,3" stroke-dashoffset="1"/>
<line x1="355.5" y1="297" x2="355.5" y2="371" stroke="#a9b1bd" stroke-dasharray="3,3" stroke-dashoffset="1"/>
<line x1="387.5" y1="4" x2="387.5" y2="217" stroke="#a9b1bd" stroke-dasharray="3,3" stroke-dashoffset="1"/>
<line x1="387.5" y1="220" x2="387.5" y2="294" stroke="#a9b1bd" stroke-dasharray="3,3" stroke-dashoffset="1"/>
<line x1="387.5" y1="297" x2="387.5" y2="371" stroke="#a9b1bd" stroke-dasharray="3,3" stroke-dashoffset="1"/>
<line x1="419.5" y1="4" x2="419.5" y2="217" stroke="#a9b1bd" stroke-dasharray="3,3" stroke-dashoffset="1"/>
<line x1="419.5" y1="220" x2="419.5" y2="294" stroke="#a9b1bd" stroke-dasharray="3,3" stroke-dashoffset="1"/>
<line x1="419.5" y1="297" x2="419.5" y2="371" stroke="#a9b1bd" stroke-dasharray="3,3" stroke-dashoffset="1"/>
<line x1="451.5" y1="4" x2="451.5" y2="217" stroke="#a9b1bd" stroke-dasharray="3,3" stroke-dashoffset="1"/>
<line x1="451.5" y1="220" x2="451.5" y2="294" stroke="#a9b1bd" stroke-dasharray="3,3" stroke-dashoffset="1"/>
<line x1="451.5" y1="297" x2="451.5" y2="371" stroke="#a9b1bd" stroke-dasharray="3,3" stroke-dashoffset="1"/>
<line x1="483.5" y1="4" x2="483.5" y2="217" stroke="#a9b1bd" stroke-dasharray="3,3" stroke-dashoffset="1"/>
<line x1="483.5" y1="220" x2="483.5" y2="294" stroke="#a9b1bd" stroke-dasharray="3,3" stroke-dashoffset="1"/>
<line x1="483.5" y1="297" x2="483.5" y2="371" stroke="#a9b1bd" stroke-dasharray="3,3" stroke-dashoffset="1"/>
<line x1="515.5" y1="4" x2="515.5" y2="217" stroke="#a9b1bd" stroke-dasharray="3,3" stroke-dashoffset="1"/>
<line x1="515.5" y1="220" x2="515.5" y2="294" stroke="#a9b1bd" stroke-dasharray="3,3" stroke-dashoffset="1"/>
<line x1="515.5" y1="297" x2="515.5" y2="371" stroke="#a9b1bd" stroke-dasharray="3,3" stroke-dashoffset="1"/>
<line x1="547.5" y1="4" x2="547.5" y2="217" stroke="#a9b1bd" stroke-dasharray="3,3" stroke-dashoffset="1"/>
<line x1="547.5" y1="220" x2="547.5" y2="294" stroke="#a9b1bd" stroke-dasharray="3,3" stroke-dashoffset="1"/>
<line x1="547.5" y1="297" x2="547.5" y2="371" stroke="#a9b1bd" stroke-dasharray="3,3" stroke-dashoffset="1"/>
<line x1="3" y1="18.5" x2="560" y2="18.5" stroke="#a9b1bd" stroke-dasharray="3,3"/>
<line x1="3" y1="52.5" x2="560" y2="52.5" stroke="#a9b1bd" stroke-dasharray="3,3"/>
<line x1="3" y1="84.5" x2="560" y2="84.5" stroke="#a9b1bd" stroke-dasharray="3,3"/>
<line x1="3" y1="116.5" x2="560" y2="116.5" stroke="#a9b1bd" stroke-dasharray="3,3"/>
<line x1="3" y1="150.5" x2="560" y2="150.5" stroke="#a9b1bd" stroke-dasharray="3,3"/>
<line x1="3" y1="182.5" x2="560" y2="182.5" stroke="#a9b1bd" stroke-dasharray="3,3"/>
<line x1="3" y1="214.5" x2="560" y2="214.5" stroke="#a9b1bd" stroke-dasharray="3,3"/>
<line x1="3" y1="314.5" x2="560" y2="314.5" stroke="#a9b1bd" stroke-dasharray="3,3"/>
<line x1="3" y1="333.5" x2="560" y2="333.5" stroke="#a9b1bd" stroke-dasharray="3,3"/>
<line x1="3" y1="352.5" x2="560" y2="352.5" stroke="#a9b1bd" stroke-dasharray="3,3"/>
<line x1="3" y1="40.5" x2="560" y2="40.5" stroke="#a8b4c4"/>
<line x1="2" y1="3.5" x2="561" y2="3.5" stroke="#fff"/>
<line x1="2" y1="217.5" x2="561" y2="217.5" stroke="#fff"/>
<line x1="2" y1="219.5" x2="561" y2="219.5" stroke="#fff"/>
<line x1="2" y1="294.5" x2="561" y2="294.5" stroke="#fff"/>
<line x1="2" y1="296.5" x2="561" y2="296.5" stroke="#fff"/>
<line x1="2" y1="371.5" x2="561" y2="371.5" stroke="#fff"/>
<line x1="560.5" y1="3" x2="560.5" y2="372" stroke="#fff"/>
<line x1="2.5" y1="3" x2="2.5" y2="372" stroke="#fff"/>
<line x1="561" y1="18.5" x2="564" y2="18.5" stroke="#fff"/>
<line x1="561" y1="52.5" x2="564" y2="52.5" stroke="#fff"/>
<line x1="561" y1="84.5" x2="564" y2="84.5" stroke="#fff"/>
<line x1="561" y1="116.5" x2="564" y2="116.5" stroke="#fff"/>
<line x1="561" y1="150.5" x2="564" y2="150.5" stroke="#fff"/>
<line x1="561" y1="182.5" x2="564" y2="182.5" stroke="#fff"/>
<line x1="561" y1="214.5" x2="564" y2="214.5" stroke="#fff"/>
<line x1="561" y1="226.5" x2="564" y2="226.5" stroke="#fff"/>
<line x1="561" y1="278.5" x2="564" y2="278.5" stroke="#fff"/>
<line x1="561" y1="288.5" x2="564" y2="288.5" stroke="#fff"/>
<line x1="561" y1="299.5" x2="564" y2="299.5" stroke="#fff"/>
<line x1="561" y1="314.5" x2="564" y2="314.5" stroke="#fff"/>
<line x1="561" y1="333.5" x2="564" y2="333.5" stroke="#fff"/>
<line x1="561" y1="352.5" x2="564" y2="352.5" stroke="#fff"/>
<line x1="561" y1="365.5" x2="564" y2="365.5" stroke="#fff"/>
<line x1="3.5" y1="371" x2="3.5" y2="375" stroke="#fff"/>
<line x1="67.5" y1="371" x2="67.5" y2="375" stroke="#fff"/>
<line x1="131.5" y1="371" x2="131.5" y2="375" stroke="#fff"/>
<line x1="195.5" y1="371" x2="195.5" y2="375" stroke="#fff"/>
<line x1="259.5" y1="371" x2="259.5" y2="375" stroke="#fff"/>
<line x1="323.5" y1="371" x2="323.5" y2="375" stroke="#fff"/>
<line x1="387.5" y1="371" x2="387.5" y2="375" stroke="#fff"/>
<line x1="451.5" y1="371" x2="451.5" y2="375" stroke="#fff"/>
<line x1="515.5" y1="371" x2="515.5" y2="375" stroke="#fff"/>
<g shape-rendering="auto" fill="none" stroke-width="1.2" stroke-linejoin="round">
<polyline points="28.0,215.0 35.0,212.6 42.0,208.0 52.0,202.0 62.0,196.6 68.0,192.0 78.0,188.0 87.0,183.4 102.0,183.0 112.0,184.4 130.0,184.4 142.0,181.0 150.0,174.0 162.0,164.0 172.0,158.0 182.0,151.6 192.0,144.0 202.0,137.0 212.0,128.0 221.0,121.6 227.0,120.4 232.0,120.6 246.0,122.4 260.0,123.4 292.0,123.4 304.0,125.0 316.0,124.6 328.0,122.6 340.0,122.6 354.0,125.6 366.0,125.6 378.0,129.4 392.0,131.4 404.0,133.0 416.0,136.4 420.0,135.6 428.0,131.0 440.0,122.0 452.0,112.0 464.0,99.0 474.0,90.0 486.0,83.0 496.0,74.0 506.0,64.0 518.0,56.4 532.0,55.0 548.0,54.0 555.0,53.0" stroke="#ff0000"/>
<polyline points="8.0,215.0 14.0,208.0 22.0,199.0 30.0,193.0 38.0,189.0 52.0,180.0 62.0,175.0 72.0,170.0 82.0,164.0 88.0,162.6 102.0,162.6 112.0,163.4 132.0,163.4 140.0,161.0 146.0,157.0 154.0,150.0 162.0,143.0 172.0,135.0 182.0,128.0 192.0,121.0 202.0,114.0 212.0,107.0 220.0,101.0 226.0,99.0 232.0,99.4 246.0,101.4 260.0,101.4 272.0,102.0 292.0,102.6 304.0,104.4 316.0,103.0 326.0,101.6 340.0,101.4 352.0,104.0 366.0,104.6 378.0,109.4 392.0,110.4 404.0,112.6 414.0,114.6 420.0,114.0 428.0,110.4 440.0,100.0 452.0,91.0 464.0,78.0 472.0,71.0 486.0,62.0 496.0,52.0 506.0,42.0 516.0,36.0 526.0,34.0 540.0,33.4 548.0,33.0 555.0,31.4" stroke="#0000ff"/>
<polyline points="3.0,200.0 6.4,172.0 11.0,168.0 17.0,173.0 24.0,179.0 32.0,167.0 40.0,177.0 45.0,173.0 51.0,169.4 55.6,176.0 60.0,174.6 69.0,181.0 72.0,181.0 80.0,166.0 84.0,168.0 89.0,167.4 95.0,168.6 101.0,176.0 107.0,179.0 115.0,175.0 119.4,168.6 123.4,174.6 128.0,172.0 132.0,166.0 135.0,168.0 139.0,146.0 142.0,137.0 144.4,132.0 146.4,111.0 149.0,108.0 153.0,108.0 156.0,110.0 161.0,104.0 166.0,103.0 168.0,107.0 171.4,120.0 175.4,110.4 179.4,119.6 183.4,112.0 187.4,120.0 191.4,110.4 195.6,118.0 199.4,111.0 203.6,102.0 208.0,111.6 212.0,106.0 215.6,101.0 219.0,103.0 223.0,111.0 227.0,111.6 231.0,109.0 236.0,112.4 244.0,113.0 248.0,116.0 256.0,119.6 259.0,117.0 263.0,120.6 268.0,120.0 272.0,117.0 276.0,119.0 279.0,120.6 283.4,105.4 288.0,109.0 295.0,113.0 300.0,113.0 303.6,114.4 308.0,109.6 311.6,108.0 315.6,112.6 319.6,92.4 323.6,100.0 327.6,105.0 331.6,104.0 335.0,111.0 340.0,130.0 347.6,142.4 352.0,133.0 359.0,116.4 367.0,125.0 371.4,136.0 379.4,133.0 383.6,122.4 387.0,123.4 391.4,121.0 395.4,113.0 403.0,121.0 407.6,122.0 411.6,125.4 415.4,116.0 419.4,128.0 421.0,109.0 423.0,90.0 428.0,81.0 431.4,67.0 435.6,59.0 439.4,48.4 443.6,52.0 447.6,55.4 451.6,54.0 455.6,50.4 460.0,51.0 463.6,53.4 467.6,58.4 471.4,55.4 475.6,60.0 479.4,55.4 483.6,62.6 487.0,62.6 491.4,46.0 495.4,43.4 499.4,30.0 503.4,27.4 507.4,27.0 511.4,19.0 515.6,29.0 519.0,30.4 523.6,43.0 527.4,41.0 531.4,47.0 535.6,44.0 539.4,39.4 543.4,50.0 547.4,52.0 551.4,42.6 554.4,40.4" stroke="#00ff00"/>
<polyline points="3.0,250.0 12.0,244.0 22.0,238.0 30.0,234.0 40.0,232.0 52.0,232.0 62.0,233.0 70.0,235.0 80.0,241.0 90.0,246.0 100.0,250.0 110.0,253.0 120.0,257.0 130.0,261.0 138.0,262.6 146.0,261.6 153.0,255.0 160.0,248.0 168.0,238.0 176.0,231.0 182.0,228.4 194.0,228.4 202.0,232.0 212.0,236.4 222.0,239.0 232.0,243.0 242.0,247.6 252.0,252.0 262.0,258.0 272.0,264.0 282.0,269.0 292.0,270.6 302.0,272.0 314.0,271.0 326.0,269.0 342.0,269.0 352.0,275.0 362.0,280.0 372.0,285.0 382.0,287.4 392.0,287.4 402.0,286.0 412.0,284.0 422.0,280.0 432.0,275.0 442.0,262.0 452.0,251.0 460.0,241.0 468.0,233.0 476.0,231.4 484.0,232.0 492.0,234.0 500.0,236.4 508.0,237.0 516.0,235.6 526.0,235.0 536.0,237.0 542.0,241.0 548.0,245.6 556.0,251.0" stroke="#ff0000" stroke-dasharray="3,3"/>
<polyline points="3.0,310.0 8.0,307.0 17.0,308.0 26.0,312.0 32.0,319.0 38.0,319.0 46.0,330.0 52.0,333.0 60.0,330.0 66.0,340.0 75.0,351.0 80.0,341.0 86.0,323.0 92.0,311.0 98.0,310.0 104.0,325.0 109.0,344.0 115.0,355.0 120.0,345.0 126.0,335.0 134.0,333.0 140.0,325.0 146.0,312.0 154.0,307.0 164.0,307.6 170.0,312.0 178.0,331.0 184.0,340.0 190.0,340.0 196.0,337.0 204.0,328.0 212.0,324.0 220.0,324.0 228.0,333.0 234.0,343.0 242.0,346.0 250.0,343.0 258.0,346.0 266.0,349.0 272.0,348.6 280.0,341.0 288.0,326.0 292.0,320.0 298.0,326.0 304.0,337.0 308.0,340.0 314.0,334.0 320.0,322.0 325.0,318.0 331.0,325.0 337.0,340.0 343.0,351.0 350.0,358.0 356.0,353.0 362.0,336.0 367.0,322.0 372.0,329.0 378.0,345.0 382.0,352.0 387.0,344.0 393.0,323.0 399.0,312.0 404.0,316.0 410.0,329.0 416.0,339.0 420.0,343.0 424.0,333.0 430.0,316.0 436.0,305.0 442.0,302.6 448.0,312.0 454.0,323.0 460.0,331.0 466.0,337.0 472.0,342.0 478.0,344.0 484.0,343.0 490.0,339.0 496.0,331.0 502.0,321.0 508.0,312.0 514.0,312.0 519.0,319.0 524.0,335.0 530.0,349.0 536.0,357.0 542.0,353.0 548.0,348.0 554.0,346.0" stroke="#ff0000" stroke-dasharray="3,3"/>
<polyline points="3.0,310.0 6.0,306.0 14.0,307.0 21.0,311.0 28.0,320.0 35.0,318.0 41.0,328.0 47.0,338.0 52.0,329.0 59.0,330.0 71.0,354.0 75.0,347.0 80.0,323.0 84.0,311.0 88.0,308.0 94.0,309.0 98.0,314.0 102.0,329.0 107.0,356.0 111.0,359.0 115.0,354.0 119.0,334.0 132.0,334.0 136.0,325.0 140.0,312.0 144.0,308.0 152.0,307.0 158.0,306.6 166.0,309.0 170.0,315.0 175.0,334.0 179.4,346.6 183.6,336.0 187.6,343.0 191.6,334.0 195.0,337.0 200.0,329.0 205.0,323.4 211.0,322.6 216.0,327.0 220.0,323.4 224.0,331.0 228.0,342.0 232.0,346.4 240.0,346.4 245.0,343.0 250.0,342.4 256.0,347.4 261.0,348.4 265.0,350.6 270.0,350.0 275.0,345.0 280.0,337.0 284.0,320.0 288.0,318.6 291.4,318.6 295.0,329.0 300.0,337.0 303.4,343.0 307.0,340.0 312.0,332.0 317.0,319.0 320.0,312.0 323.0,318.0 328.0,322.0 333.0,334.0 338.0,348.0 343.0,357.0 348.0,359.4 353.0,356.0 357.0,343.0 361.0,325.0 364.0,316.0 367.0,321.0 371.0,334.0 376.0,351.0 379.6,358.4 383.0,350.0 387.0,334.0 390.0,318.0 393.0,311.0 397.0,309.0 401.0,312.0 405.0,323.0 409.0,338.0 412.0,347.4 416.0,342.0 419.0,347.0 422.0,322.0 425.0,315.0 430.0,305.0 434.0,301.4 438.0,302.0 442.0,305.0 447.0,314.0 452.0,326.0 457.0,332.0 462.0,335.0 467.0,343.0 472.0,343.4 475.6,348.4 479.6,340.0 483.6,343.4 487.0,341.4 494.0,326.0 500.0,314.0 503.0,314.6 507.0,310.0 511.0,310.0 516.0,317.0 520.0,331.0 524.0,347.0 528.0,356.0 531.6,361.4 536.0,355.0 540.0,348.0 543.0,346.0 547.0,348.0 551.0,349.0 554.0,340.0 555.6,336.4" stroke="#20b2aa"/>
</g>
<path d="M3.5,278.5V245.5M7.5,278.5V238.5M11.5,278.5V235.5M15.5,278.5V234.5M19.5,278.5V234.5M23.5,278.5V234.5M27.5,278.5V233.5M31.5,278.5V233.5M35.5,278.5V233.5M39.5,278.5V233.5M43.5,278.5V234.5M47.5,278.5V234.5M51.5,278.5V234.5M55.5,278.5V235.5M59.5,278.5V237.5M63.5,278.5V239.5M67.5,278.5V242.5M71.5,278.5V244.5M75.5,278.5V249.5M79.5,278.5V250.5M83.5,278.5V250.5M87.5,278.5V251.5M91.5,278.5V252.5M95.5,278.5V253.5M99.5,278.5V254.5M103.5,278.5V257.5M107.5,278.5V260.5M111.5,278.5V261.5M115.5,278.5V264.5M119.5,278.5V263.5M123.5,278.5V265.5M127.5,278.5V266.5M131.5,278.5V265.5M135.5,278.5V265.5M139.5,278.5V262.5M143.5,278.5V254.5M147.5,278.5V244.5M151.5,278.5V237.5M155.5,278.5V234.5M159.5,278.5V226.5M163.5,278.5V224.5M167.5,278.5V223.5M171.5,278.5V227.5M175.5,278.5V227.5M179.5,278.5V230.5M183.5,278.5V232.5M187.5,278.5V234.5M191.5,278.5V236.5M195.5,278.5V238.5M199.5,278.5V240.5M203.5,278.5V241.5M207.5,278.5V242.5M211.5,278.5V243.5M215.5,278.5V243.5M219.5,278.5V243.5M223.5,278.5V244.5M227.5,278.5V247.5M231.5,278.5V250.5M235.5,278.5V253.5M239.5,278.5V255.5M243.5,278.5V258.5M247.5,278.5V259.5M251.5,278.5V261.5M255.5,278.5V263.5M259.5,278.5V266.5M263.5,278.5V268.5M267.5,278.5V271.5M271.5,278.5V271.5M275.5,278.5V272.5M279.5,278.5V273.5M283.5,278.5V273.5M287.5,278.5V272.5M291.5,278.5V271.5M295.5,278.5V271.5M299.5,278.5V271.5M303.5,278.5V272.5M307.5,278.5V272.5M311.5,278.5V272.5M315.5,278.5V271.5M319.5,278.5V270.5M323.5,278.5V268.5M327.5,278.5V267.5M331.5,278.5V268.5M335.5,278.5V270.5M339.5,278.5V275.5M343.5,278.5V279.5M347.5,278.5V285.5M351.5,278.5V287.5M355.5,278.5V287.5M359.5,278.5V286.5M363.5,278.5V283.5M367.5,278.5V284.5M371.5,278.5V287.5M375.5,278.5V288.5M379.5,278.5V289.5M383.5,278.5V290.1M387.5,278.5V287.5M391.5,278.5V284.5M395.5,278.5V282.5M399.5,278.5V281.5M403.5,278.5V281.1M407.5,278.5V280.5M411.5,278.5V280.5M415.5,278.5V280.5M419.5,278.5V279.5M423.5,278.5V274.5M427.5,278.5V267.5M431.5,278.5V258.5M435.5,278.5V250.5M439.5,278.5V242.5M443.5,278.5V237.5M447.5,278.5V233.5M451.5,278.5V231.5M455.5,278.5V229.5M459.5,278.5V228.5M463.5,278.5V229.5M467.5,278.5V231.5M471.5,278.5V232.5M475.5,278.5V234.5M479.5,278.5V236.5M483.5,278.5V238.5M487.5,278.5V242.5M491.5,278.5V242.5M495.5,278.5V241.5M499.5,278.5V238.5M503.5,278.5V236.5M507.5,278.5V234.5M511.5,278.5V232.5M515.5,278.5V233.5M519.5,278.5V234.5M523.5,278.5V237.5M527.5,278.5V239.5M531.5,278.5V242.5M535.5,278.5V247.5M539.5,278.5V250.5M543.5,278.5V252.5M547.5,278.5V255.5M551.5,278.5V257.5M555.5,278.5V261.5" stroke="#c0c0c0" fill="none"/>
<line x1="7" y1="278.5" x2="558" y2="278.5" stroke="#c0c0c0" stroke-dasharray="5,3,2,2"/>
<line x1="2" y1="278.5" x2="5" y2="278.5" stroke="#c0c0c0"/>
<g shape-rendering="auto" stroke="#fff" stroke-width="0.25">
<text x="5" y="14">GBPUSD,M30&#160;&#160;1.8405 1.8411 1.8396 1.8407</text>
<text x="5.300000000000011" y="232">MACD(12,26,9)&#160;&#160;&#160;0.001169&#160;&#160;0.001779</text>
<text x="5.300000000000011" y="309">Stochastic(5,3,3)&#160;&#160;47.5410&#160;&#160;35.6354</text>
<text x="563.3" y="21.5">1.8445</text>
<text x="563.3" y="55.5">1.8385</text>
<text x="563.3" y="87.5">1.8330</text>
<text x="563.3" y="119.5">1.8275</text>
<text x="563.3" y="153.5">1.8215</text>
<text x="563.3" y="185.5">1.8160</text>
<text x="563.3" y="217.0">1.8105</text>
<text x="564" y="229.5">0.00381</text>
<text x="564" y="281.5">0.00</text>
<text x="564" y="291">-0.00102</text>
<text x="564" y="303">100</text>
<text x="564" y="318.5">75</text>
<text x="564" y="336">50</text>
<text x="564" y="355.5">25</text>
<text x="564" y="369">0</text>
<text x="1.5999999999999943" y="384">20 Oct 15:30</text>
<text x="65.60000000000002" y="384">20 Oct 23:30</text>
<text x="129.60000000000002" y="384">21 Oct 07:30</text>
<text x="193.60000000000002" y="384">21 Oct 15:30</text>
<text x="257.6" y="384">21 Oct 23:30</text>
<text x="321.6" y="384">22 Oct 07:30</text>
<text x="385.6" y="384">22 Oct 15:30</text>
<text x="449.6" y="384">25 Oct 03:30</text>
<text x="513.6" y="384">25 Oct 11:30</text>
<rect x="563" y="34" width="34" height="12" fill="#fff"/>
<text x="566.5" y="43.5" fill="#000" stroke="#000">1.8407</text>
</g>
</svg>

<svg width="800" height="94" viewBox="0 506 800 94" style="left:0;top:506px" font-family="Liberation Sans, WenQuanYi Zen Hei, Noto Sans CJK SC, sans-serif">
<rect x="0" y="506" width="800" height="94" fill="#ece9d8"/>
<path d="M4.500 513L9 517.500M9 513L4.500 517.500" stroke="#000" stroke-width="1.500"/>
<rect x="2" y="524" width="12" height="51" fill="#5c7a3c"/>
<text transform="translate(12.500,574) rotate(-90)" font-size="11.500" fill="#a9b99b">终端</text>
<rect x="17" y="512" width="781" height="49" fill="#fff"/>
<path d="M16.500 561V511.500H798" stroke="#716f64" fill="none"/><path d="M798.500 511V561" stroke="#ffffff"/>
<rect x="18" y="513" width="776" height="15.500" fill="#ece9d8"/>
<path d="M18 528.500H794.500V513" stroke="#aca899" fill="none"/><path d="M18.500 528V513.500H794" stroke="#ffffff" fill="none"/>
<path d="M166.500 514V527" stroke="#aca899"/><path d="M167.500 514V527" stroke="#ffffff"/>
<text x="23" y="525.500" font-size="12" fill="#000">时间</text><text x="173" y="525.500" font-size="12" fill="#000">主题</text>
<path d="M17 561.500H798" stroke="#000"/>
<path d="M54 576.500L48.500 562H87.500L82 576.500Z" fill="#fff"/>
<path d="M24 575.500H49M84 575.500H128M133.500 575.500H158M163.500 575.500H191M196.500 575.500H222.500M54.500 576.500H81.500" stroke="#6e6c60" fill="none"/>
<path d="M18 562L24 575.500M49 562L54.500 576.500M81.500 576.500L87.500 562M127.500 562L133.500 575.500M157.500 562L163.500 575.500M190.500 562L196.500 575.500M222.500 575.500L230.500 562" stroke="#000" fill="none" stroke-width="1.100"/>
<text x="29" y="572.800" font-size="9.500" fill="#000" stroke="#000" stroke-width="0.450" textLength="16" lengthAdjust="spacingAndGlyphs">交易</text>
<text x="58.5" y="572.800" font-size="9.500" fill="#000" stroke="#000" stroke-width="0.450" textLength="19.5" lengthAdjust="spacingAndGlyphs">新闻</text>
<text x="90" y="572.800" font-size="9.500" fill="#000" stroke="#000" stroke-width="0.450" textLength="34.5" lengthAdjust="spacingAndGlyphs">账户历史</text>
<text x="139.5" y="572.800" font-size="9.500" fill="#000" stroke="#000" stroke-width="0.450" textLength="16.5" lengthAdjust="spacingAndGlyphs">警报</text>
<text x="170" y="572.800" font-size="9.500" fill="#000" stroke="#000" stroke-width="0.450" textLength="17.5" lengthAdjust="spacingAndGlyphs">邮箱</text>
<text x="202" y="572.800" font-size="9.500" fill="#000" stroke="#000" stroke-width="0.450" textLength="16" lengthAdjust="spacingAndGlyphs">日志</text>
<path d="M0 580.500H800" stroke="#aca899" opacity="0.5"/><path d="M0 581.500H800" stroke="#ffffff"/>
<text x="4" y="596" font-size="13" fill="#000" textLength="64" lengthAdjust="spacing">帮助请按</text><text x="70" y="596" font-size="12.500" fill="#000" textLength="16" lengthAdjust="spacingAndGlyphs">F1</text>
<path d="M206.5 600V584.500H281" stroke="#aca899" fill="none"/><path d="M281.5 584V600" stroke="#ffffff"/>
<path d="M284.5 600V584.500H381" stroke="#aca899" fill="none"/><path d="M381.5 584V600" stroke="#ffffff"/>
<path d="M384.5 600V584.500H451" stroke="#aca899" fill="none"/><path d="M451.5 584V600" stroke="#ffffff"/>
<path d="M454.5 600V584.500H523" stroke="#aca899" fill="none"/><path d="M523.5 584V600" stroke="#ffffff"/>
<path d="M526.5 600V584.500H593" stroke="#aca899" fill="none"/><path d="M593.5 584V600" stroke="#ffffff"/>
<path d="M596.5 600V584.500H663" stroke="#aca899" fill="none"/><path d="M663.5 584V600" stroke="#ffffff"/>
<path d="M666.5 600V584.500H729" stroke="#aca899" fill="none"/><path d="M729.5 584V600" stroke="#ffffff"/>
<rect x="733" y="585" width="62" height="15" fill="#3eea42"/>
<path d="M732.5 600V584.500H795" stroke="#aca899" fill="none"/><path d="M795.5 584V600" stroke="#ffffff"/>
<text x="211" y="596" font-size="11" fill="#000" textLength="32" lengthAdjust="spacingAndGlyphs">Default</text>
<text x="737" y="596.500" font-size="11" fill="#000" textLength="43" lengthAdjust="spacingAndGlyphs">134/0 kb</text>
</svg>
</body></html>
